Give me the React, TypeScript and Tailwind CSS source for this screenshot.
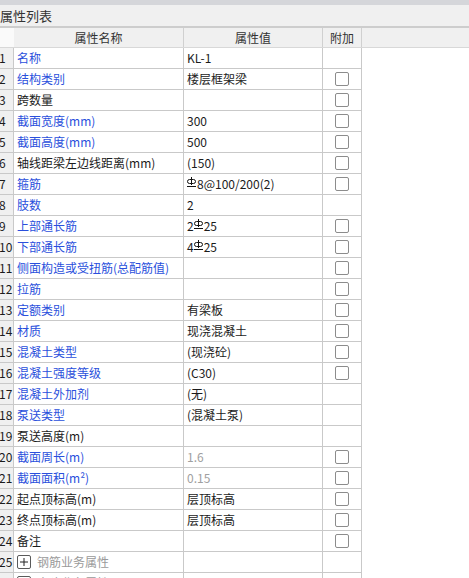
import React from 'react';

type Row = {
  name: string;
  value?: React.ReactNode;
  blue?: boolean;
  check?: boolean;
  muted?: boolean;
  group?: boolean;
};

function Rebar() {
  return (
    <svg width="9" height="10" viewBox="0 0 9 10" className="block mb-[4px] mr-[1px]">
      <line x1="4.5" y1="0" x2="4.5" y2="8" stroke="#111" strokeWidth="1" />
      <rect x="0.5" y="2.5" width="8" height="4" rx="2" fill="none" stroke="#111" strokeWidth="1" />
      <line x1="0" y1="9.5" x2="9" y2="9.5" stroke="#111" strokeWidth="1" />
    </svg>
  );
}

const rows: Row[] = [
  { name: '名称', value: 'KL-1', blue: true },
  { name: '结构类别', value: '楼层框架梁', blue: true, check: true },
  { name: '跨数量', check: true },
  { name: '截面宽度(mm)', value: '300', blue: true, check: true },
  { name: '截面高度(mm)', value: '500', blue: true, check: true },
  { name: '轴线距梁左边线距离(mm)', value: '(150)', check: true },
  { name: '箍筋', value: <><Rebar />8@100/200(2)</>, blue: true, check: true },
  { name: '肢数', value: '2', blue: true },
  { name: '上部通长筋', value: <>2<Rebar />25</>, blue: true, check: true },
  { name: '下部通长筋', value: <>4<Rebar />25</>, blue: true, check: true },
  { name: '侧面构造或受扭筋(总配筋值)', blue: true, check: true },
  { name: '拉筋', blue: true, check: true },
  { name: '定额类别', value: '有梁板', blue: true, check: true },
  { name: '材质', value: '现浇混凝土', blue: true, check: true },
  { name: '混凝土类型', value: '(现浇砼)', blue: true, check: true },
  { name: '混凝土强度等级', value: '(C30)', blue: true, check: true },
  { name: '混凝土外加剂', value: '(无)', blue: true },
  { name: '泵送类型', value: '(混凝土泵)', blue: true },
  { name: '泵送高度(m)' },
  { name: '截面周长(m)', value: '1.6', blue: true, check: true, muted: true },
  { name: '截面面积(m²)', value: '0.15', blue: true, check: true, muted: true },
  { name: '起点顶标高(m)', value: '层顶标高', check: true },
  { name: '终点顶标高(m)', value: '层顶标高', check: true },
  { name: '备注', check: true },
  { name: '钢筋业务属性', group: true },
  { name: '土建业务属性', group: true },
];

function PlusBox() {
  return (
    <span className="inline-flex w-[14px] h-[14px] border border-[#5a5a5a] rounded-[2px] bg-white items-center justify-center mr-[6px]">
      <svg width="8" height="8" viewBox="0 0 8 8">
        <line x1="0" y1="4" x2="8" y2="4" stroke="#222" strokeWidth="1" />
        <line x1="4" y1="0" x2="4" y2="8" stroke="#222" strokeWidth="1" />
      </svg>
    </span>
  );
}

export default function App() {
  return (
    <div
      className="h-screen w-full overflow-hidden bg-white text-[12px] text-[#1b1b1b]"
      style={{ fontFamily: '"Microsoft YaHei", "Noto Sans CJK SC", "Noto Sans", sans-serif' }}
    >
      <div className="h-[5px] bg-[#d5d6da]" />
      <div className="h-[21px] bg-[#f0f0f0] flex items-center text-[#333] text-[13px]">属性列表</div>
      <div className="h-[2px] bg-[#cdcdcd]" />

      <div className="grid grid-cols-[14px_170px_139px_39px_1fr] h-[20px] bg-[#f0f0f0] text-[#333] border-b border-[#d8d8d8]">
        <div className="bg-[#fafafa]" />
        <div className="flex items-center justify-center border-r border-[#d0d0d0]">属性名称</div>
        <div className="flex items-center justify-center border-r border-[#d0d0d0]">属性值</div>
        <div className="flex items-center justify-center border-r border-[#d0d0d0]">附加</div>
        <div />
      </div>

      {rows.map((r, i) => (
        <div key={i} className="grid grid-cols-[14px_170px_139px_39px_1fr] h-[21px]">
          <div className="bg-[#f0f0f0] border-r border-b border-[#c9c9c9] flex items-center overflow-hidden whitespace-nowrap leading-none -ml-[1px]">
            {i + 1}
          </div>
          <div
            className={`flex items-center border-r border-b border-[#c9c9c9] pl-[3px] whitespace-nowrap overflow-hidden ${
              r.group ? 'text-[#9a9a9a] pl-[1px]' : r.blue ? 'text-[#2a4fdc]' : ''
            }`}
          >
            {r.group && <PlusBox />}
            {r.name}
          </div>
          <div
            className={`flex items-center border-r border-b border-[#c9c9c9] pl-[3px] whitespace-nowrap overflow-hidden ${
              r.muted ? 'text-[#a0a0a0]' : ''
            }`}
          >
            <span className="inline-flex items-center">{r.value}</span>
          </div>
          <div className="flex items-center justify-center border-r border-b border-[#c9c9c9]">
            {r.check && <span className="block w-[14px] h-[14px] border border-[#8c8c8c] rounded-[2px] bg-white" />}
          </div>
          <div />
        </div>
      ))}
    </div>
  );
}
